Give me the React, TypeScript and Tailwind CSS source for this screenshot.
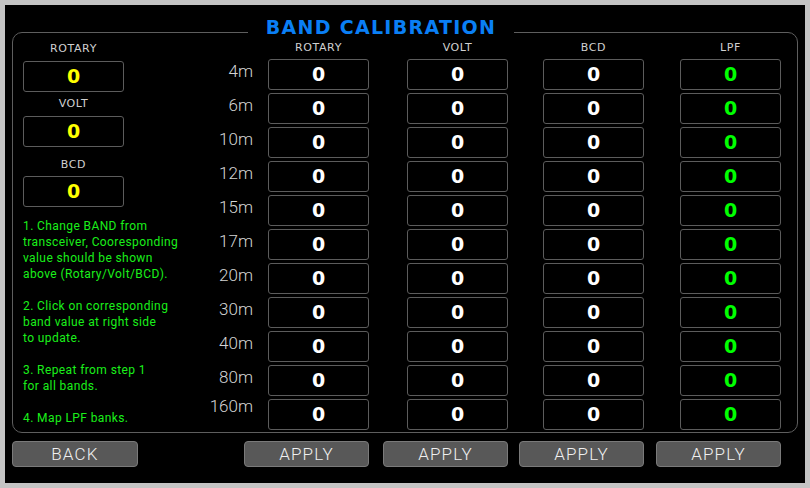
import React from "react";

const bands = ["4m", "6m", "10m", "12m", "15m", "17m", "20m", "30m", "40m", "80m", "160m"];
const columns = ["ROTARY", "VOLT", "BCD", "LPF"];
const colMargins = ["ml-[15px]", "ml-[38px]", "ml-[35px]", "ml-[36px]"];

const steps = [
  ["1. Change BAND from", "transceiver, Cooresponding", "value should be shown", "above (Rotary/Volt/BCD)."],
  ["2. Click on corresponding", "band value at right side", "to update."],
  ["3. Repeat from step 1", "for all bands."],
  ["4. Map LPF banks."],
];

function ValueBox({ color = "text-white" }: { color?: string }) {
  return (
    <div className="flex h-[31px] w-[101px] items-center justify-center rounded-[3px] border border-[#5c5c5c]">
      <span className={`font-['DejaVu_Sans',sans-serif] text-[19px] font-bold leading-none ${color}`}>0</span>
    </div>
  );
}

function Label({ children }: { children: React.ReactNode }) {
  return (
    <span className="font-['DejaVu_Sans',sans-serif] text-[11px] leading-[14px] tracking-[0.6px] text-[#d0d0d0]">
      {children}
    </span>
  );
}

function Button({ label, className }: { label: string; className?: string }) {
  return (
    <button
      className={`flex h-[26px] w-[125px] items-center justify-center rounded-[4px] border border-[#7a7a7a] bg-[#585858] font-['Roboto',sans-serif] text-[17px] font-light leading-none tracking-[1.2px] text-[#f0f0f0] ${className ?? ""}`}
    >
      {label}
    </button>
  );
}

export default function App() {
  return (
    <div className="h-[488px] w-[810px] bg-[#c4c4c4] p-[5px]">
      <div className="flex h-full w-full flex-col bg-black pl-[7px] pt-[27px]">
        <div className="relative flex h-[401px] w-[786px] rounded-[10px] border border-[#5e5e5e]">
          <div className="absolute -top-[18px] left-[235px] w-[266px] bg-black text-center font-['DejaVu_Sans',sans-serif] text-[19px] font-bold leading-[24px] tracking-[1.3px] text-[#0a7ff5]">
            BAND CALIBRATION
          </div>

          {/* left column */}
          <div className="ml-[10px] flex w-[101px] flex-col pt-[9px]">
            <div className="flex h-[14px] justify-center">
              <Label>ROTARY</Label>
            </div>
            <div className="mt-[5px]">
              <ValueBox color="text-[#ffff00]" />
            </div>
            <div className="flex h-[24px] items-center justify-center">
              <Label>VOLT</Label>
            </div>
            <ValueBox color="text-[#ffff00]" />
            <div className="flex h-[29px] items-center justify-center pt-[6px]">
              <Label>BCD</Label>
            </div>
            <ValueBox color="text-[#ffff00]" />
            <div className="mt-[11px] flex w-[170px] flex-col gap-[16px] font-['Roboto',sans-serif] text-[12px] leading-[16px] tracking-[0.4px] text-[#1aef1a]">
              {steps.map((lines, i) => (
                <div key={i}>
                  {lines.map((line) => (
                    <div key={line} className="whitespace-nowrap">
                      {line}
                    </div>
                  ))}
                </div>
              ))}
            </div>
          </div>

          {/* band grid */}
          <div className="flex flex-col">
            <div className="flex h-[26px] items-start pt-[8px]">
              <div className="w-[129px]" />
              {columns.map((c, i) => (
                <div key={c} className={`flex w-[101px] justify-center ${colMargins[i]}`}>
                  <Label>{c}</Label>
                </div>
              ))}
            </div>
            <div className="flex flex-col gap-[3px]">
              {bands.map((b) => (
                <div key={b} className="flex h-[31px] items-center">
                  <div
                    className={`w-[129px] text-right font-['Roboto',sans-serif] text-[17px] font-light leading-none text-[#d4d4d4] ${
                      b === "160m" ? "-translate-y-[8px]" : "-translate-y-[3px]"
                    }`}
                  >
                    {b}
                  </div>
                  {columns.map((c, i) => (
                    <div key={c} className={colMargins[i]}>
                      <ValueBox color={c === "LPF" ? "text-[#00ff00]" : "text-white"} />
                    </div>
                  ))}
                </div>
              ))}
            </div>
          </div>
        </div>

        <div className="mt-[8px] flex">
          <Button label="BACK" className="w-[126px]" />
          <Button label="APPLY" className="ml-[106px]" />
          <Button label="APPLY" className="ml-[14px]" />
          <Button label="APPLY" className="ml-[11px]" />
          <Button label="APPLY" className="ml-[12px]" />
        </div>
      </div>
    </div>
  );
}
